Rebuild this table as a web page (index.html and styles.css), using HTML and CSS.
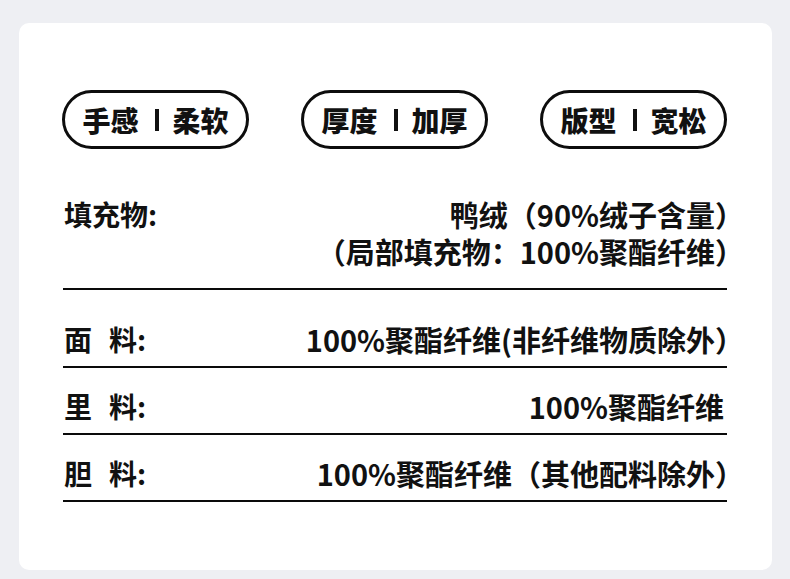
FILE: index.html
```html
<!DOCTYPE html>
<html lang="zh-CN">
<head>
<meta charset="utf-8">
<title>面料信息</title>
<link rel="stylesheet" href="styles.css">
</head>
<body>
<div class="card">
  <div class="pills">
    <div class="pill"><span>手感</span><i class="bar"></i><span>柔软</span></div>
    <div class="pill"><span>厚度</span><i class="bar"></i><span>加厚</span></div>
    <div class="pill"><span>版型</span><i class="bar"></i><span>宽松</span></div>
  </div>
  <div class="table">
    <div class="row row-1">
      <div class="label">填充物:</div>
      <div class="value paren-end">
        <div class="line">鸭绒（90%绒子含量）</div>
        <div class="line">（局部填充物：100%聚酯纤维）</div>
      </div>
    </div>
    <div class="row row-2">
      <div class="label">面<span class="sp"></span>料:</div>
      <div class="value paren-end">100%聚酯纤维(非纤维物质除外）</div>
    </div>
    <div class="row row-n">
      <div class="label">里<span class="sp"></span>料:</div>
      <div class="value">100%聚酯纤维</div>
    </div>
    <div class="row row-n">
      <div class="label">胆<span class="sp"></span>料:</div>
      <div class="value paren-end">100%聚酯纤维（其他配料除外）</div>
    </div>
  </div>
</div>
</body>
</html>
```
FILE: styles.css
```css
html, body {
  margin: 0;
  padding: 0;
}
body {
  background: #eeeff3;
  width: 790px;
  height: 579px;
  overflow: hidden;
  font-family: "Noto Sans CJK SC", "Noto Sans", sans-serif;
  color: #111;
}
.card {
  margin: 23px 0 0 19px;
  width: 753px;
  height: 547px;
  box-sizing: border-box;
  background: #fff;
  border-radius: 10px;
  padding: 67px 45px 0 43px;
}
.pills {
  display: flex;
  justify-content: space-between;
}
.pill {
  width: 187px;
  height: 59px;
  box-sizing: border-box;
  border: 3px solid #0d0d0d;
  border-radius: 30px;
  display: flex;
  align-items: center;
  justify-content: center;
  font-size: 28px;
  font-weight: 900;
  line-height: 1;
  padding-top: 1px;
}
.bar {
  display: inline-block;
  width: 4px;
  height: 22px;
  background: #111;
  margin: 0 14px 0 16px;
}
.table {
  margin-top: 47px;
  padding-left: 1px;
}
.row {
  display: flex;
  justify-content: space-between;
  align-items: flex-start;
  border-bottom: 2px solid #0a0a0a;
  font-size: 28px;
  font-weight: 700;
  line-height: 37px;
}
.row-1 {
  padding: 0 0 18px;
}
.row-2 {
  padding: 31px 0 8px;
}
.row-n {
  padding: 20px 0 8px;
}
.label {
  white-space: nowrap;
  padding-left: 1px;
}
.sp {
  display: inline-block;
  width: 17px;
}
.value {
  font-size: 29px;
  text-align: right;
  white-space: nowrap;
  margin-right: 3px;
}
.value.paren-end {
  margin-right: -17px;
}
.line {
  height: 37px;
}
```
